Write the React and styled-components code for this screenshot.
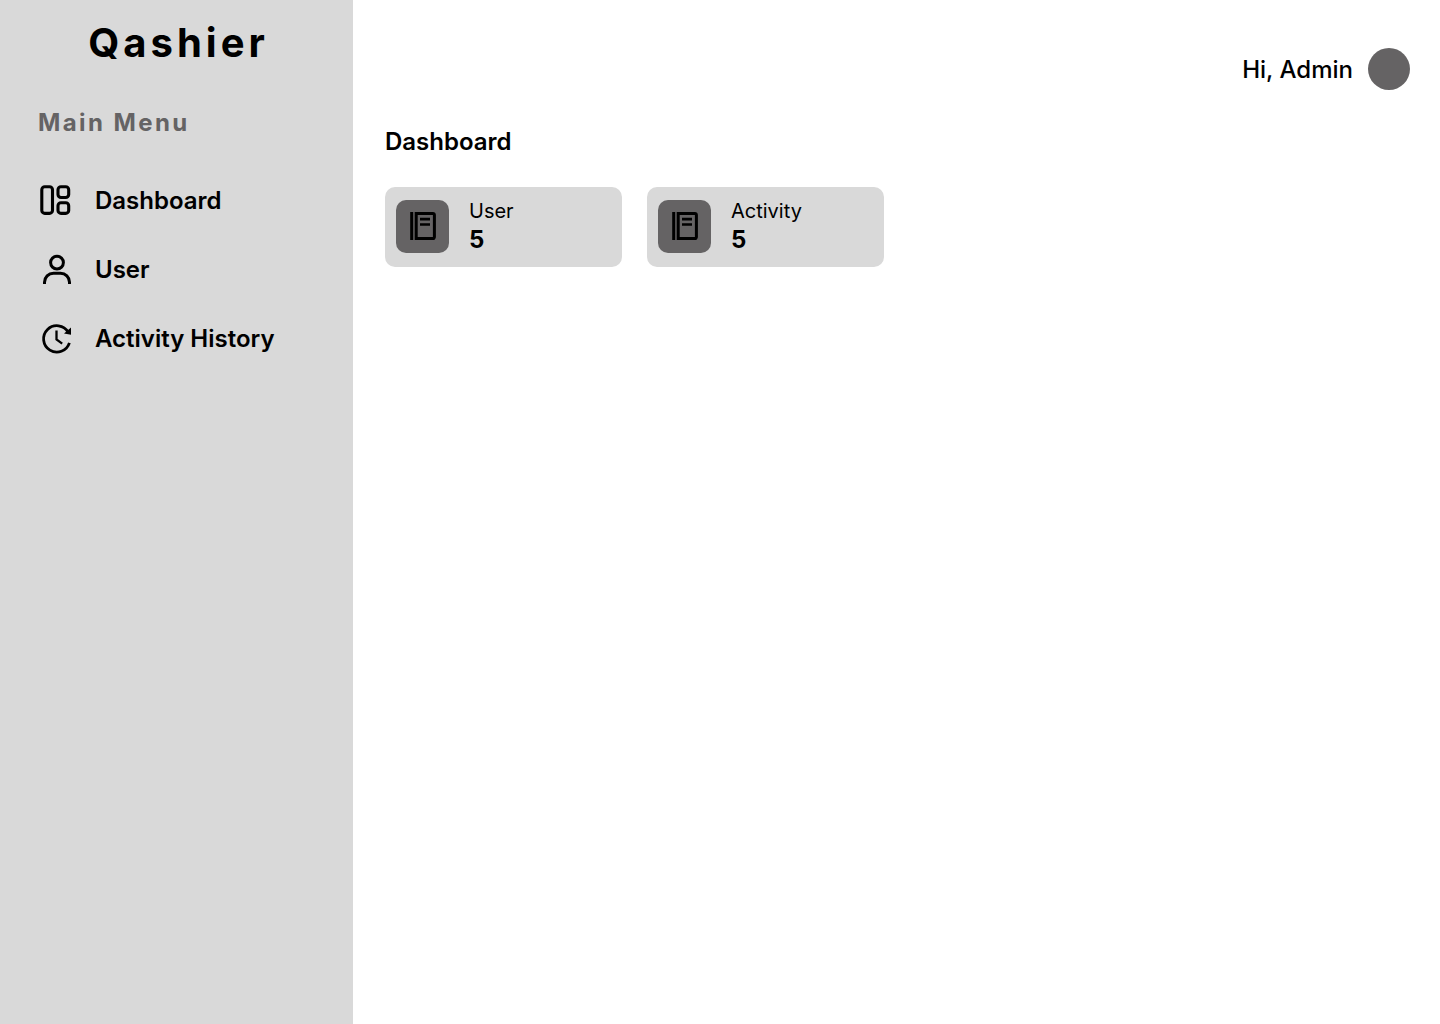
import React from "react";
import styled, { createGlobalStyle } from "styled-components";

const GlobalStyle = createGlobalStyle`
  *, *::before, *::after { box-sizing: border-box; }
  body {
    margin: 0;
    background: #ffffff;
    color: #000000;
    font-family: Inter, "Liberation Sans", sans-serif;
  }
  h1, h2, p, ul { margin: 0; padding: 0; }
`;

const Layout = styled.div`
  display: flex;
  min-height: 100vh;
`;

const Sidebar = styled.aside`
  flex: 0 0 353px;
  padding: 19px 38px;
  background: #d9d9d9;
`;

/* The left padding balances the tracking after the last letter. */
const Brand = styled.p`
  padding-left: 4px;
  font-size: 40px;
  font-weight: 700;
  line-height: 48px;
  letter-spacing: 0.1em;
  text-align: center;
`;

const MenuTitle = styled.h2`
  margin-top: 41px;
  color: #656364;
  font-size: 24px;
  font-weight: 700;
  line-height: 30px;
  letter-spacing: 0.1em;
`;

const MenuList = styled.ul`
  display: flex;
  flex-direction: column;
  gap: 33px;
  margin-top: 45px;
  list-style: none;
`;

const MenuLink = styled.a`
  display: flex;
  align-items: center;
  gap: 21px;
  height: 36px;
  color: inherit;
  font-size: 24px;
  font-weight: 600;
  line-height: 30px;
  text-decoration: none;
`;

const Icon = styled.svg`
  display: block;
  flex: none;
  width: ${(p) => p.$size}px;
  height: ${(p) => p.$size}px;
`;

const Main = styled.main`
  flex: 1;
  min-width: 0;
  padding: 48px 30px 48px 32px;
`;

const TopBar = styled.header`
  display: flex;
  align-items: center;
  justify-content: flex-end;
  gap: 15px;
`;

const Greeting = styled.p`
  padding-top: 2px;
  font-size: 24px;
  font-weight: 500;
  line-height: 30px;
`;

const Avatar = styled.button`
  width: 42px;
  height: 42px;
  padding: 0;
  border: 0;
  border-radius: 50%;
  background: #656364;
`;

const PageTitle = styled.h1`
  margin-top: 37px;
  font-size: 24px;
  font-weight: 600;
  line-height: 30px;
`;

const Cards = styled.div`
  display: flex;
  flex-wrap: wrap;
  gap: 25px;
  margin-top: 30px;
`;

const Card = styled.section`
  display: flex;
  align-items: center;
  gap: 20px;
  width: 237px;
  height: 80px;
  padding: 0 11px 1px;
  border-radius: 10px;
  background: #d9d9d9;
`;

const Tile = styled.div`
  display: grid;
  place-items: center;
  width: 53px;
  height: 53px;
  border-radius: 10px;
  background: #656364;
`;

const CardText = styled.div`
  display: grid;
  gap: 1px;
`;

const CardLabel = styled.h2`
  font-size: 20px;
  font-weight: 400;
  line-height: 26px;
`;

const CardValue = styled.p`
  font-size: 24px;
  font-weight: 700;
  line-height: 30px;
`;

function DashboardIcon() {
  return (
    <Icon $size={36} viewBox="0 1 36 36" fill="none" stroke="currentColor" strokeWidth="3.1" aria-hidden="true">
      <rect x="3.8" y="4.8" width="10.7" height="26.6" rx="3" />
      <rect x="20" y="4.8" width="10.7" height="10.7" rx="3" />
      <rect x="20" y="20.7" width="10.7" height="10.7" rx="3" />
    </Icon>
  );
}

function UserIcon() {
  return (
    <Icon $size={36} viewBox="0 1 36 36" fill="none" stroke="currentColor" strokeWidth="3" aria-hidden="true">
      <circle cx="19" cy="11.6" r="6.4" />
      <path d="M6.5 33V31.2a9 9 0 0 1 9-9h7a9 9 0 0 1 9 9V33" />
    </Icon>
  );
}

function HistoryIcon() {
  return (
    <Icon $size={36} viewBox="0 1 36 36" fill="none" stroke="currentColor" strokeWidth="2.8" aria-hidden="true">
      <path d="M30.2 12.2A13.2 13.2 0 1 0 31.4 22.8" />
      <path d="M18.5 10.4V19.4L24.2 23.6" strokeWidth="2.3" />
      <path d="M33 7.6V14.8L26 13.4Z" fill="currentColor" stroke="none" />
    </Icon>
  );
}

function BookIcon() {
  return (
    <Icon $size={33} viewBox="0 0 33 33" fill="none" stroke="currentColor" strokeWidth="3" aria-hidden="true">
      <path d="M5.7 2V30" />
      <path d="M10.2 3.5H27a1.4 1.4 0 0 1 1.4 1.4V27.1a1.4 1.4 0 0 1-1.4 1.4H10.2Z" />
      <path d="M14 9.2H24M14 14.5H24" strokeWidth="2.7" />
    </Icon>
  );
}

const menu = [
  { label: "Dashboard", href: "#dashboard", Glyph: DashboardIcon },
  { label: "User", href: "#user", Glyph: UserIcon },
  { label: "Activity History", href: "#activity-history", Glyph: HistoryIcon },
];

const stats = [
  { label: "User", value: 5 },
  { label: "Activity", value: 5 },
];

export default function App() {
  return (
    <>
      <GlobalStyle />
      <Layout>
        <Sidebar>
          <Brand>Qashier</Brand>
          <nav aria-labelledby="menu-title">
            <MenuTitle id="menu-title">Main Menu</MenuTitle>
            <MenuList>
              {menu.map(({ label, href, Glyph }) => (
                <li key={label}>
                  <MenuLink href={href}>
                    <Glyph />
                    {label}
                  </MenuLink>
                </li>
              ))}
            </MenuList>
          </nav>
        </Sidebar>
        <Main>
          <TopBar>
            <Greeting>Hi, Admin</Greeting>
            <Avatar type="button" aria-label="Account" />
          </TopBar>
          <PageTitle>Dashboard</PageTitle>
          <Cards>
            {stats.map(({ label, value }) => (
              <Card key={label}>
                <Tile>
                  <BookIcon />
                </Tile>
                <CardText>
                  <CardLabel>{label}</CardLabel>
                  <CardValue>{value}</CardValue>
                </CardText>
              </Card>
            ))}
          </Cards>
        </Main>
      </Layout>
    </>
  );
}
